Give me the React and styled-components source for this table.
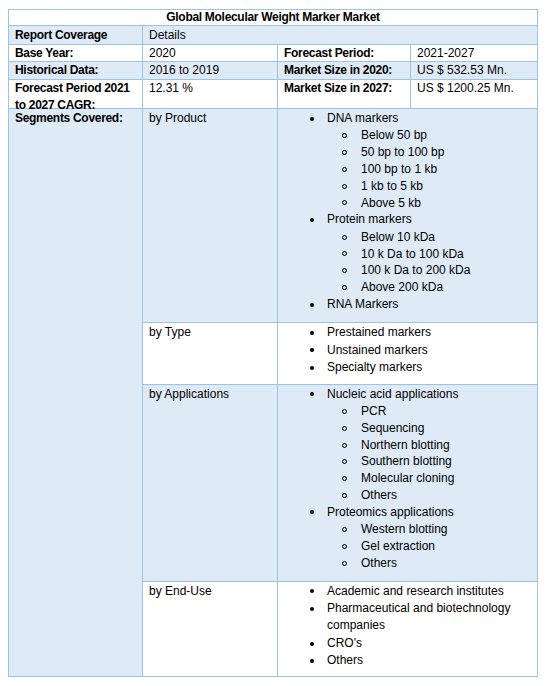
import React from "react";
import styled, { createGlobalStyle } from "styled-components";

const BLUE = "#deeaf6";
const LINE = "#9cc2e5";

const GlobalStyle = createGlobalStyle`
  body {
    margin: 0;
    background: #fff;
    color: #000;
    font-family: "Liberation Sans", Arial, sans-serif;
  }
`;

const Page = styled.div`
  padding: 9px 0 0 8px;
`;

const Table = styled.div`
  display: grid;
  width: 530px;
  box-sizing: border-box;
  grid-template-columns: 133px 134px 132px 126px;
  grid-template-rows: 15px 18px 16px 17px 28px auto auto auto auto;
  gap: 1px;
  padding: 1px;
  background: ${LINE};
`;

const Cell = styled.div`
  grid-column: ${(p) => p.$col || "auto"};
  grid-row: ${(p) => p.$row || "auto"};
  background: ${(p) => (p.$shade ? BLUE : "#fff")};
  padding: ${(p) => (p.$top ? p.$top : 0)}px 6px 0;
  font-size: 12px;
  line-height: ${(p) => p.$lh || 16}px;
  font-weight: ${(p) => (p.$bold ? 700 : 400)};
  letter-spacing: ${(p) => (p.$bold ? "-0.3px" : "0")};
  text-align: ${(p) => (p.$center ? "center" : "left")};
  min-width: 0;
`;

const ListCell = styled.div`
  grid-column: 3 / 5;
  background: ${(p) => (p.$shade ? BLUE : "#fff")};
  padding: 1px 0 ${(p) => p.$pb}px;
  font-size: 12px;
`;

const List = styled.ul`
  list-style: none;
  margin: 0;
  padding: 0;
`;

const Item = styled.li`
  display: flex;
  padding-left: ${(p) => (p.$level === 2 ? 64 : 32)}px;
  line-height: ${(p) => (p.$level === 2 ? 16.8 : 17.4)}px;
`;

const Marker = styled.span`
  flex: 0 0 ${(p) => (p.$level === 2 ? 19 : 17)}px;
  height: ${(p) => (p.$level === 2 ? 16.8 : 17.4)}px;
  display: flex;
  align-items: center;

  &::before {
    content: "";
    display: block;
    box-sizing: border-box;
    width: ${(p) => (p.$level === 2 ? 5 : 4)}px;
    height: ${(p) => (p.$level === 2 ? 5 : 4)}px;
    border-radius: 50%;
    background: ${(p) => (p.$level === 2 ? "transparent" : "#000")};
    border: ${(p) => (p.$level === 2 ? "1px solid #000" : "none")};
  }
`;

const segments = [
  {
    label: "by Product",
    shade: true,
    pb: 9,
    items: [
      ["DNA markers", ["Below 50 bp", "50 bp to 100 bp", "100 bp to 1 kb", "1 kb to 5 kb", "Above 5 kb"]],
      ["Protein markers", ["Below 10 kDa", "10 k Da to 100 kDa", "100 k Da to 200 kDa", "Above 200 kDa"]],
      ["RNA Markers", []],
    ],
  },
  {
    label: "by Type",
    shade: false,
    pb: 7,
    items: [
      ["Prestained markers", []],
      ["Unstained markers", []],
      ["Specialty markers", []],
    ],
  },
  {
    label: "by Applications",
    shade: true,
    pb: 9,
    items: [
      [
        "Nucleic acid applications",
        ["PCR", "Sequencing", "Northern blotting", "Southern blotting", "Molecular cloning", "Others"],
      ],
      ["Proteomics applications", ["Western blotting", "Gel extraction", "Others"]],
    ],
  },
  {
    label: "by End-Use",
    shade: false,
    pb: 6,
    items: [
      ["Academic and research institutes", []],
      ["Pharmaceutical and biotechnology companies", []],
      ["CRO's", []],
      ["Others", []],
    ],
  },
];

const App = () => {
  return (
    <Page>
      <GlobalStyle />
      <Table>
        <Cell $col="1 / 5" $bold $center $lh={15}>
          Global Molecular Weight Marker Market
        </Cell>

        <Cell $shade $bold $top={1}>Report Coverage</Cell>
        <Cell $shade $col="2 / 5" $top={1}>Details</Cell>

        <Cell $bold>Base Year:</Cell>
        <Cell>2020</Cell>
        <Cell $bold>Forecast Period:</Cell>
        <Cell>2021-2027</Cell>

        <Cell $shade $bold>Historical Data:</Cell>
        <Cell $shade>2016 to 2019</Cell>
        <Cell $shade $bold>Market Size in 2020:</Cell>
        <Cell $shade>US $ 532.53 Mn.</Cell>

        <Cell $bold $lh={17}>Forecast Period 2021 to 2027 CAGR:</Cell>
        <Cell>12.31 %</Cell>
        <Cell $bold>Market Size in 2027:</Cell>
        <Cell>US $ 1200.25 Mn.</Cell>

        <Cell $shade $bold $col="1" $row="6 / 10" $top={1}>
          Segments Covered:
        </Cell>

        {segments.map((s) => (
          <React.Fragment key={s.label}>
            <Cell $shade={s.shade} $col="2" $top={1}>
              {s.label}
            </Cell>
            <ListCell $shade={s.shade} $pb={s.pb}>
              <List>
                {s.items.map(([name, subs]) => (
                  <React.Fragment key={name}>
                    <Item $level={1}>
                      <Marker $level={1} />
                      <span>{name}</span>
                    </Item>
                    {subs.map((sub) => (
                      <Item $level={2} key={sub}>
                        <Marker $level={2} />
                        <span>{sub}</span>
                      </Item>
                    ))}
                  </React.Fragment>
                ))}
              </List>
            </ListCell>
          </React.Fragment>
        ))}
      </Table>
    </Page>
  );
};

export default App;
